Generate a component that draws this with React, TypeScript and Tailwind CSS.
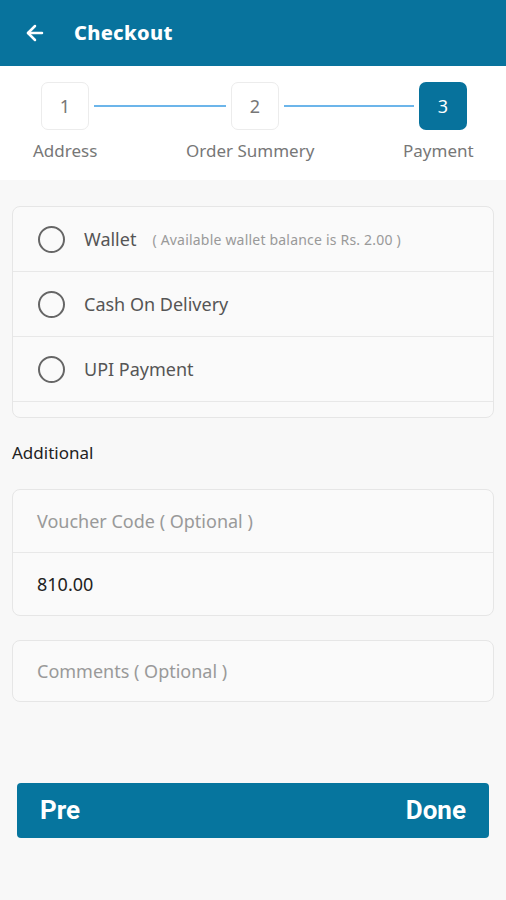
import { ArrowLeft } from "lucide-react";

const font = { fontFamily: "'Noto Sans', Lato, sans-serif" };

function Step({ n, active = false }: { n: number; active?: boolean }) {
  return (
    <div
      className={
        active
          ? "flex h-[48px] w-[48px] items-center justify-center rounded-[7px] bg-[#07729c] text-[18px] text-white"
          : "flex h-[48px] w-[48px] items-center justify-center rounded-[7px] border border-[#ececec] bg-white text-[18px] text-[#777]"
      }
    >
      {n}
    </div>
  );
}

function Radio({ label, note }: { label: string; note?: string }) {
  return (
    <div className="flex h-[65px] items-center border-b border-[#e8e8e8] pl-[25px]">
      <div className="h-[27px] w-[27px] rounded-full border-[2.5px] border-[#666]" />
      <span className="ml-[19px] text-[18px] leading-[24px] text-[#555]">{label}</span>
      {note && <span className="ml-[16px] text-[14px] tracking-[0.2px] text-[#999]">{note}</span>}
    </div>
  );
}

export default function App() {
  return (
    <div className="flex min-h-[900px] w-[506px] flex-col bg-[#f8f8f8]" style={font}>
      <div className="flex h-[66px] items-center bg-[#08739d] pl-[23px]">
        <ArrowLeft size={24} strokeWidth={2.5} className="text-white" />
        <span className="ml-[27px] text-[20px] font-extrabold leading-[28px] tracking-[0.3px] text-white">Checkout</span>
      </div>

      <div className="h-[114px] bg-white pt-[16px]">
        <div className="flex items-center pl-[41px]">
          <Step n={1} />
          <div className="mx-[5px] h-[2px] w-[132px] bg-[#6cb5ea]" />
          <Step n={2} />
          <div className="mx-[5px] h-[2px] w-[130px] bg-[#6cb5ea]" />
          <Step n={3} active />
        </div>
        <div className="relative mt-[9px] h-[24px] text-[17px] leading-[24px] text-[#777]">
          <span className="absolute left-[33px]">Address</span>
          <span className="absolute left-[186px]">Order Summery</span>
          <span className="absolute left-[403px]">Payment</span>
        </div>
      </div>

      <div className="px-[12px] pt-[26px]">
        <div className="overflow-hidden rounded-[8px] border border-[#e6e6e6] bg-[#fafafa]">
          <Radio label="Wallet" note="( Available wallet balance is Rs. 2.00 )" />
          <Radio label="Cash On Delivery" />
          <Radio label="UPI Payment" />
          <div className="h-[15px]" />
        </div>

        <div className="mt-[23px] text-[17px] leading-[24px] text-[#222]">Additional</div>

        <div className="mt-[24px] overflow-hidden rounded-[8px] border border-[#e6e6e6] bg-[#fafafa]">
          <div className="flex h-[63px] items-center border-b border-[#e8e8e8] pl-[24px] text-[18px] text-[#999]">
            Voucher Code ( Optional )
          </div>
          <div className="flex h-[62px] items-center pl-[24px] text-[18px] text-[#222]">810.00</div>
        </div>

        <div className="mt-[24px] flex h-[62px] items-center rounded-[8px] border border-[#e6e6e6] bg-[#fafafa] pl-[24px] text-[18px] text-[#999]">
          Comments ( Optional )
        </div>
      </div>

      <div className="px-[17px] pt-[81px]">
        <div
          className="flex h-[55px] items-center justify-between rounded-[4px] bg-[#06759e] px-[23px] text-[26px] font-bold text-white"
          style={{ fontFamily: "Roboto, sans-serif" }}
        >
          <span>Pre</span>
          <span>Done</span>
        </div>
      </div>
    </div>
  );
}
